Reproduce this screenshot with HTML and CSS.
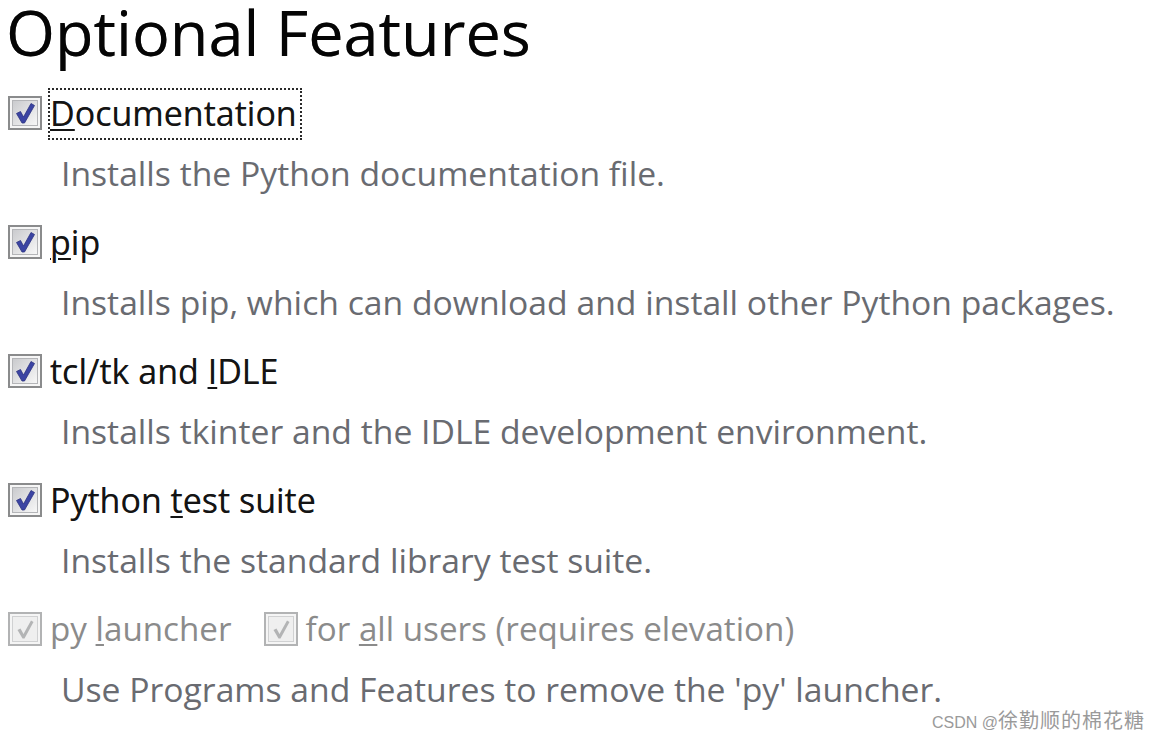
FILE: index.html
```html
<!DOCTYPE html>
<html lang="en">
<head>
<meta charset="utf-8">
<title>Optional Features</title>
<link rel="stylesheet" href="styles.css">
</head>
<body>
<div class="page">
  <h1 class="title">Optional Features</h1>

  <div class="feature">
    <div class="opt">
      <span class="cb"><svg viewBox="0 0 34 34" width="34" height="34"><defs><linearGradient id="g1" x1="0" y1="0" x2="1" y2="1"><stop offset="0" stop-color="#c9cacd"/><stop offset="1" stop-color="#f8f8f8"/></linearGradient></defs><rect x="1" y="1" width="32" height="32" fill="#f6f6f6" stroke="#8a8b8c" stroke-width="2"/><rect x="4.5" y="4.5" width="25" height="25" fill="url(#g1)" stroke="#b4b5b8" stroke-width="1"/><path d="M8.5 17.5 L12.5 15.5 L15.5 21 L23 7.5 L26.5 9.5 L16.5 27 L14 27 Z" fill="#3b44a3" stroke="#2c3280" stroke-width="0.8" stroke-linejoin="round"/></svg></span>
      <span class="label focus"><u>D</u>ocumentation</span>
    </div>
    <div class="desc">Installs the Python documentation file.</div>
  </div>

  <div class="feature">
    <div class="opt">
      <span class="cb"><svg viewBox="0 0 34 34" width="34" height="34"><rect x="1" y="1" width="32" height="32" fill="#f6f6f6" stroke="#8a8b8c" stroke-width="2"/><rect x="4.5" y="4.5" width="25" height="25" fill="url(#g1)" stroke="#b4b5b8" stroke-width="1"/><path d="M8.5 17.5 L12.5 15.5 L15.5 21 L23 7.5 L26.5 9.5 L16.5 27 L14 27 Z" fill="#3b44a3" stroke="#2c3280" stroke-width="0.8" stroke-linejoin="round"/></svg></span>
      <span class="label"><u>p</u>ip</span>
    </div>
    <div class="desc">Installs pip, which can download and install other Python packages.</div>
  </div>

  <div class="feature">
    <div class="opt">
      <span class="cb"><svg viewBox="0 0 34 34" width="34" height="34"><rect x="1" y="1" width="32" height="32" fill="#f6f6f6" stroke="#8a8b8c" stroke-width="2"/><rect x="4.5" y="4.5" width="25" height="25" fill="url(#g1)" stroke="#b4b5b8" stroke-width="1"/><path d="M8.5 17.5 L12.5 15.5 L15.5 21 L23 7.5 L26.5 9.5 L16.5 27 L14 27 Z" fill="#3b44a3" stroke="#2c3280" stroke-width="0.8" stroke-linejoin="round"/></svg></span>
      <span class="label">tcl/tk and <u>I</u>DLE</span>
    </div>
    <div class="desc">Installs tkinter and the IDLE development environment.</div>
  </div>

  <div class="feature">
    <div class="opt">
      <span class="cb"><svg viewBox="0 0 34 34" width="34" height="34"><rect x="1" y="1" width="32" height="32" fill="#f6f6f6" stroke="#8a8b8c" stroke-width="2"/><rect x="4.5" y="4.5" width="25" height="25" fill="url(#g1)" stroke="#b4b5b8" stroke-width="1"/><path d="M8.5 17.5 L12.5 15.5 L15.5 21 L23 7.5 L26.5 9.5 L16.5 27 L14 27 Z" fill="#3b44a3" stroke="#2c3280" stroke-width="0.8" stroke-linejoin="round"/></svg></span>
      <span class="label">Python <u>t</u>est suite</span>
    </div>
    <div class="desc">Installs the standard library test suite.</div>
  </div>

  <div class="feature">
    <div class="opt">
      <span class="cb"><svg viewBox="0 0 34 34" width="34" height="34"><rect x="1" y="1" width="32" height="32" fill="#f5f5f5" stroke="#b2b3b4" stroke-width="2"/><rect x="4.5" y="4.5" width="25" height="25" fill="#efefef" stroke="#d0d1d2" stroke-width="1"/><path d="M9.5 18 L12.5 16.5 L15.5 22 L23 8.5 L25.5 10 L16.5 26.5 L14.5 26.5 Z" fill="#b3b4b5"/></svg></span>
      <span class="label disabled">py <u>l</u>auncher</span>
      <span class="cb cb-second"><svg viewBox="0 0 34 34" width="34" height="34"><rect x="1" y="1" width="32" height="32" fill="#f5f5f5" stroke="#b2b3b4" stroke-width="2"/><rect x="4.5" y="4.5" width="25" height="25" fill="#efefef" stroke="#d0d1d2" stroke-width="1"/><path d="M9.5 18 L12.5 16.5 L15.5 22 L23 8.5 L25.5 10 L16.5 26.5 L14.5 26.5 Z" fill="#b3b4b5"/></svg></span>
      <span class="label disabled">for <u>a</u>ll users (requires elevation)</span>
    </div>
    <div class="desc">Use Programs and Features to remove the 'py' launcher.</div>
  </div>
</div>
<div class="watermark">CSDN @<span class="wm-cjk">徐勤顺的棉花糖</span></div>
</body>
</html>
```

FILE: styles.css
```css
html, body {
  margin: 0;
  padding: 0;
  background: #ffffff;
}

body {
  width: 1160px;
  height: 740px;
  overflow: hidden;
  position: relative;
  font-family: "Open Sans", "Noto Sans", sans-serif;
}

.page {
  padding-left: 6px;
}

.title {
  margin: 0;
  font-size: 63px;
  line-height: 63px;
  font-weight: 400;
  color: #050505;
  text-shadow: 0 0 0.6px rgba(0, 0, 0, 0.6);
}

.feature {
  display: flex;
  flex-direction: column;
  gap: 20px;
  padding-bottom: 29px;
}

.feature:first-of-type {
  margin-top: 30px;
}

.opt {
  display: flex;
  align-items: flex-start;
  height: 40px;
  padding-left: 2px;
}

.cb {
  display: block;
  width: 34px;
  height: 34px;
  margin-top: 3px;
  flex: none;
}

.cb svg {
  display: block;
}

.cb-second {
  margin-left: 32px;
}

.label {
  font-size: 34px;
  line-height: 40px;
  color: #141414;
  margin-left: 8px;
  white-space: nowrap;
  text-shadow: 0 0 0.5px rgba(0, 0, 0, 0.5);
}

.label u {
  text-decoration-thickness: 2px;
  text-underline-offset: 3px;
}

.cb-second + .label {
  margin-left: 8px;
}

.focus {
  border: 2px dotted #2a2a2a;
  padding: 3px 3px 5px 0;
  margin: -5px 0 -7px 6px;
}

.disabled {
  font-size: 33.2px;
  color: #8b8b8b;
  text-shadow: none;
}

.desc {
  font-size: 33.7px;
  line-height: 40px;
  color: #696b71;
  padding-left: 55px;
  white-space: nowrap;
}

.watermark {
  position: absolute;
  left: 932px;
  top: 707px;
  font-family: "Liberation Sans", "Noto Sans CJK SC", sans-serif;
  font-size: 16px;
  line-height: 26px;
  color: #9a9a9a;
  white-space: nowrap;
}

.wm-cjk {
  font-family: "Noto Sans CJK SC", sans-serif;
  font-size: 20px;
  letter-spacing: 1px;
}
```
